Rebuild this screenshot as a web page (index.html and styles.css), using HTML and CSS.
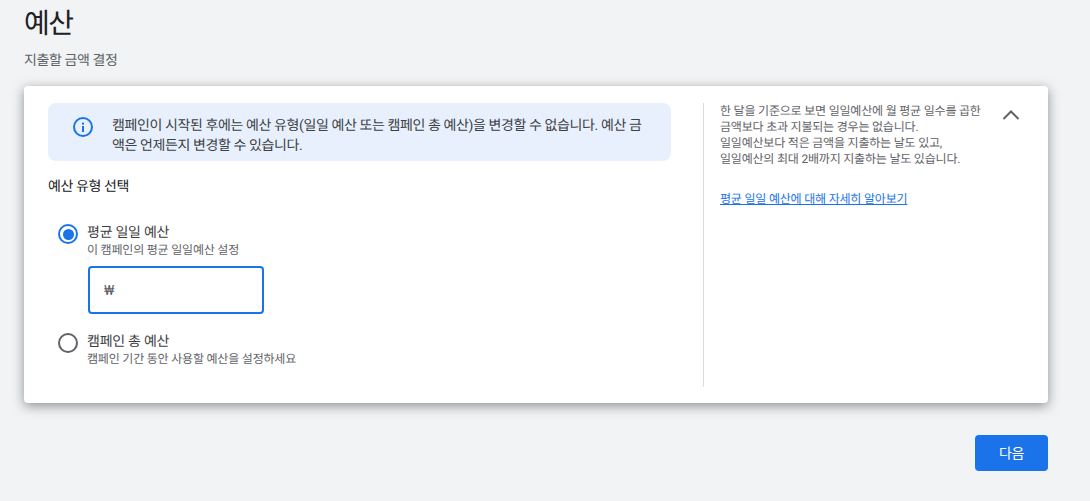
FILE: index.html
```html
<!DOCTYPE html>
<html lang="ko">
<head>
<meta charset="utf-8">
<title>예산</title>
<link rel="stylesheet" href="styles.css">
</head>
<body>
<main class="page">
  <h1 class="title">예산</h1>
  <p class="subtitle">지출할 금액 결정</p>
  <section class="card">
    <div class="left">
      <div class="notice">
        <svg class="info" viewBox="0 0 24 24" width="24" height="24" fill="none" aria-hidden="true">
          <circle cx="12" cy="12" r="9" stroke="#1a73e8" stroke-width="2"/>
          <rect x="11" y="11" width="2" height="6" fill="#1a73e8"/>
          <rect x="11" y="7.6" width="2" height="2" fill="#1a73e8"/>
        </svg>
        <p class="notice-text">캠페인이 시작된 후에는 예산 유형(일일 예산 또는 캠페인 총 예산)을 변경할 수 없습니다. 예산 금액은 언제든지 변경할 수 있습니다.</p>
      </div>
      <h2 class="section-title">예산 유형 선택</h2>
      <div class="option first">
        <span class="radio checked"></span>
        <div class="option-body">
          <div class="option-label">평균 일일 예산</div>
          <div class="option-desc">이 캠페인의 평균 일일예산 설정</div>
          <div class="input"><span class="currency">₩</span></div>
        </div>
      </div>
      <div class="option second">
        <span class="radio"></span>
        <div class="option-body">
          <div class="option-label">캠페인 총 예산</div>
          <div class="option-desc">캠페인 기간 동안 사용할 예산을 설정하세요</div>
        </div>
      </div>
    </div>
    <aside class="right">
      <div class="help">
        <p class="help-text">한 달을 기준으로 보면 일일예산에 월 평균 일수를 곱한 금액보다 초과 지불되는 경우는 없습니다.<br>일일예산보다 적은 금액을 지출하는 날도 있고,<br>일일예산의 최대 2배까지 지출하는 날도 있습니다.</p>
        <a class="help-link" href="#">평균 일일 예산에 대해 자세히 알아보기</a>
      </div>
      <svg class="chevron" viewBox="0 0 24 24" width="24" height="24" fill="none" aria-hidden="true">
        <path d="M4.5 16 12 8.5l7.5 7.5" stroke="#5f6368" stroke-width="2"/>
      </svg>
    </aside>
  </section>
  <div class="actions"><button class="next" type="button">다음</button></div>
</main>
</body>
</html>
```
FILE: styles.css
```css
* { box-sizing: border-box; }
html, body { margin: 0; height: 501px; overflow: hidden; }
body {
  background: #f1f3f4;
  color: #3c4043;
  font-family: Roboto, "Noto Sans CJK KR", sans-serif;
  text-rendering: geometricPrecision;
}
.page { padding: 0 42px 0 24px; }
.title {
  margin: 0;
  padding-top: 6px;
  font-size: 28px;
  line-height: 36px;
  font-weight: 400;
  letter-spacing: -1.5px;
  color: #202124;
}
.subtitle {
  margin: 9px 0 0;
  font-size: 14px;
  line-height: 20px;
  letter-spacing: -0.4px;
  color: #5f6368;
}
.card {
  display: flex;
  margin-top: 15px;
  height: 317px;
  padding: 17px 0 16px 24px;
  background: #fff;
  border-radius: 4px;
  box-shadow: 0 3px 12px rgba(60, 64, 67, .55);
}
.left { width: 655px; flex: none; padding-right: 32px; }
.notice {
  display: flex;
  height: 58px;
  padding: 12px 24px 0 23px;
  background: #e8f0fe;
  border-radius: 8px;
}
.info { flex: none; margin-right: 17px; }
.notice-text {
  margin: 1px 0 0;
  font-size: 14px;
  line-height: 20px;
  letter-spacing: -0.4px;
  color: #3c4043;
}
.section-title {
  margin: 16px 0 0;
  font-size: 14px;
  line-height: 20px;
  font-weight: 400;
  letter-spacing: -0.4px;
  color: #202124;
}
.option { display: flex; padding-left: 10px; }
.option.first { margin-top: 26px; }
.option.second { margin-top: 18px; }
.radio {
  flex: none;
  position: relative;
  width: 20px;
  height: 20px;
  margin-top: 1px;
  margin-right: 9px;
  border: 2px solid #5f6368;
  border-radius: 50%;
}
.radio.checked { border-color: #1a73e8; }
.radio.checked::after {
  content: "";
  position: absolute;
  inset: 2.5px;
  border-radius: 50%;
  background: #1a73e8;
}
.option-label { padding-top: 1px; font-size: 14px; line-height: 18px; letter-spacing: -0.25px; color: #3c4043; }
.option-desc { font-size: 12px; line-height: 16px; letter-spacing: -0.2px; color: #5f6368; }
.input {
  display: flex;
  align-items: center;
  width: 176px;
  height: 48px;
  margin: 8px 0 0 1px;
  padding: 2px 0 0 14px;
  border: 2px solid #1a73e8;
  border-radius: 4px;
}
.currency { font-size: 14px; color: #5f6368; }
.right {
  flex: 1;
  display: flex;
  align-items: flex-start;
  padding-left: 16px;
  border-left: 1px solid #dadce0;
}
.help { width: 264px; flex: none; }
.help-text {
  margin: 0;
  font-size: 12px;
  line-height: 16px;
  letter-spacing: -0.2px;
  color: #5f6368;
}
.help-link {
  display: inline-block;
  margin-top: 24px;
  font-size: 12px;
  line-height: 16px;
  letter-spacing: -0.2px;
  color: #1a73e8;
  text-decoration: underline;
}
.chevron { flex: none; margin-left: 15px; }
.actions { display: flex; justify-content: flex-end; margin-top: 32px; }
.next {
  width: 73px;
  height: 36px;
  padding: 0 0 2px;
  border: 0;
  border-radius: 4px;
  background: #1a73e8;
  color: #fff;
  font: inherit;
  font-size: 14px;
  letter-spacing: -0.4px;
}
```
